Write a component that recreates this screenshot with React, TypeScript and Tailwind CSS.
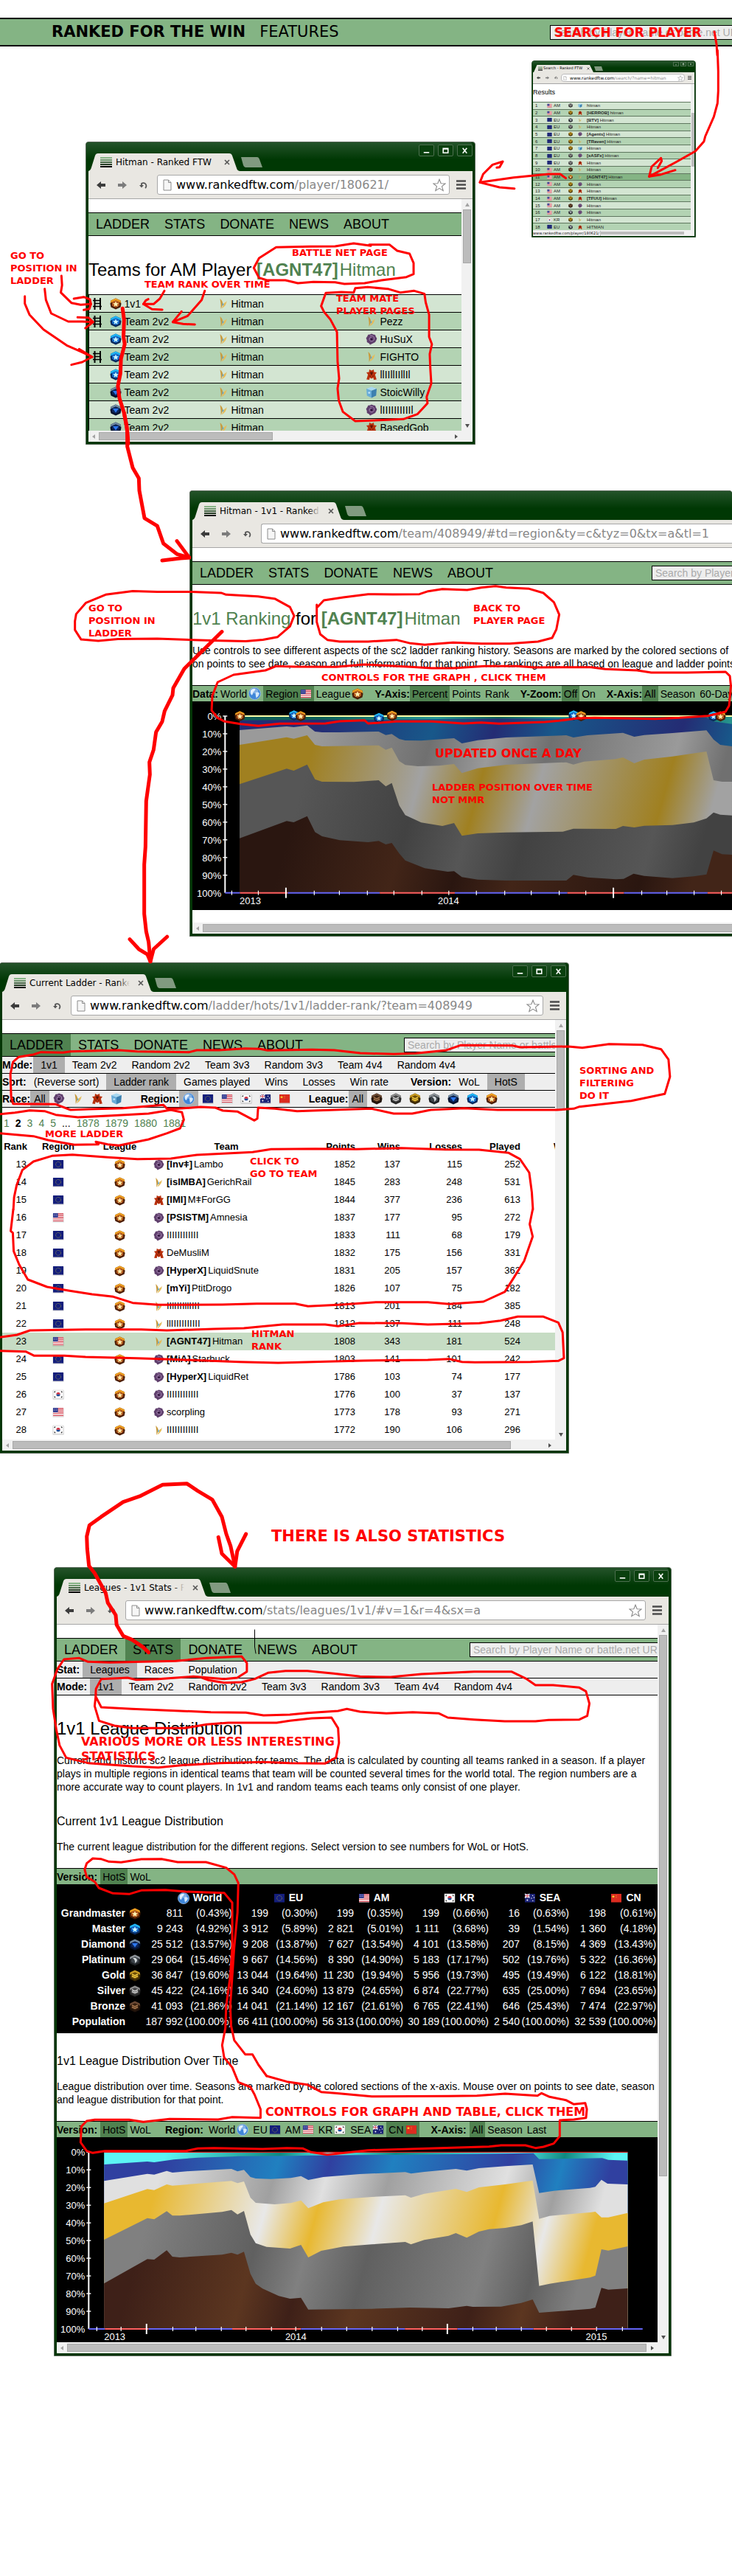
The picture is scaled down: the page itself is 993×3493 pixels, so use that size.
import React from "react";

type Pt = [number, number];
type League = "gm" | "master" | "diamond" | "platinum" | "gold" | "silver" | "bronze";
type Race = "zerg" | "protoss" | "terran" | "random";
type Flag = "eu" | "us" | "kr" | "au" | "cn" | "world";

const LEAGUES: Record<League, { rim: string; body: string; mark: string; mid: string }> = {
  gm: { rim: "#f0a020", body: "#4a1c04", mid: "#b0561a", mark: "#fff0b0" },
  master: { rim: "#20b8f8", body: "#08285c", mid: "#1268c8", mark: "#c8f4ff" },
  diamond: { rim: "#7088a0", body: "#04102c", mid: "#0c2458", mark: "#2c78f0" },
  platinum: { rim: "#8c9298", body: "#1c1f22", mid: "#3c4248", mark: "#d4dade" },
  gold: { rim: "#c89a20", body: "#3a2804", mid: "#6c4c08", mark: "#f4cc40" },
  silver: { rim: "#8c8c8c", body: "#262626", mid: "#444444", mark: "#cfcfcf" },
  bronze: { rim: "#6c4a34", body: "#20120a", mid: "#38200f", mark: "#a87850" },
};

function LeagueShape({ league }: { league: League }) {
  const c = LEAGUES[league];
  return (
    <g>
      <path d="M8 0.5 L14.5 3.5 L15.5 8 L14.5 12.5 L8 15.5 L1.5 12.5 L0.5 8 L1.5 3.5Z" fill={c.body} />
      <path d="M8 3 L13 5.4 V10.6 L8 13 L3 10.6 V5.4Z" fill={c.mid} />
      <path d="M8 0.5 L14.5 3.5 L15.2 7 L12.5 5.2 L8 3.2 L3.5 5.2 L0.8 7 L1.5 3.5Z" fill={c.rim} />
      {league === "gm" || league === "master" ? (
        <path d="M8 4.2 L9.1 7 L12 7.2 L9.8 9 L10.6 12 L8 10.3 L5.4 12 L6.2 9 L4 7.2 L6.9 7Z" fill={c.mark} />
      ) : league === "diamond" ? (
        <path d="M4 6 H12 L8 11.5Z" fill={c.mark} />
      ) : league === "platinum" ? (
        <path d="M5 5 Q10 4 11 8 Q11 10 8 12 Q9 8 5 5Z" fill={c.mark} />
      ) : (
        <path d="M4 6 L8 8 L12 6 M4 8.5 L8 10.5 L12 8.5" fill="none" stroke={c.mark} strokeWidth="1.4" />
      )}
    </g>
  );
}

function LeagueIcon({ league, className = "size-4" }: { league: League; className?: string }) {
  return (
    <svg viewBox="0 0 16 16" className={`${className} shrink-0`} aria-hidden="true">
      <LeagueShape league={league} />
    </svg>
  );
}

function RaceIcon({ race, className = "size-4" }: { race: Race; className?: string }) {
  return (
    <svg viewBox="0 0 16 16" className={`${className} shrink-0`} aria-hidden="true">
      {race === "zerg" && (
        <g>
          <path d="M8 0.4 L10.4 1.4 L13 2 L13.8 4.6 L15.4 7 L14.4 9.6 L13 12 L10 13.6 L6 15.4 L4.6 13.4 L1.8 12 L1.6 9 L0.6 6.6 L2.2 4.2 L3.4 1.8 L6 1.6Z" fill="#5f3f6c" />
          <path d="M8 8 Q9.5 6 7.5 5.4 Q4.6 5.4 5 8.4 Q6 11.6 9.6 10.6 Q12.6 9 11.4 5.4 Q9.6 2.6 6 3.2" fill="none" stroke="#a888b4" strokeWidth="1" />
          <circle cx="8" cy="8" r="1.4" fill="#2c1238" />
        </g>
      )}
      {race === "protoss" && (
        <g>
          <path d="M3.5 1 Q7.8 5 7.2 9 L4.6 15 Q5 9 3.5 1Z" fill="#c99a3c" />
          <path d="M12.6 4 Q12.2 11 5.6 14.4 Q8.2 10 8.6 7.2 Q11 6.6 12.6 4Z" fill="#e4bd5e" />
          <path d="M6.8 6.4 L8.8 9 L6.6 10.8Z" fill="#5aa8d8" />
        </g>
      )}
      {race === "terran" && (
        <g fill="#b8300c">
          <path d="M5 1 L8 2.4 L11 1 L11.4 4.4 L15 5 L12.8 8 L14.8 14.6 L11 15 L10.4 12 L8 13.6 L5.6 12 L5 15 L1.2 14.6 L3.2 8 L1 5 L4.6 4.4Z" />
          <path d="M6.4 5 H9.6 L8 8.6Z M5 9.4 L7 10.6 M11 9.4 L9 10.6" fill="#5c1204" stroke="#5c1204" strokeWidth="0.8" />
        </g>
      )}
      {race === "random" && (
        <g>
          <path d="M8 0.4 L15 3 L8 5.8 L1 3Z" fill="#a8d8f0" />
          <path d="M1 3 L8 5.8 V15.6 L1.8 12.4Z" fill="#68acd8" />
          <path d="M15 3 L8 5.8 V15.6 L14.2 12.4Z" fill="#3c80b0" />
          <circle cx="4.8" cy="8.6" r="1.4" fill="#c0e4f8" />
        </g>
      )}
    </svg>
  );
}

function FlagIcon({ flag, className = "h-4 w-4" }: { flag: Flag; className?: string }) {
  return (
    <svg viewBox="0 0 16 16" className={`${className} shrink-0`} aria-hidden="true">
      {flag === "world" && (
        <g>
          <circle cx="8" cy="8" r="7.6" fill="#3f86d8" stroke="#a8c8ec" strokeWidth="0.7" />
          <path d="M3 4 Q6 1 9 2 Q8 5 6 6 Q6 9 4.4 10 Q1.4 8 3 4Z M9 7 Q13 5 14 8 Q13 12 10 13.6 Q9 10 9 7Z" fill="#d4e8fa" />
          <ellipse cx="7.5" cy="4.6" rx="5" ry="3.2" fill="#fff" opacity="0.35" />
        </g>
      )}
      {flag !== "world" && <rect x="0.6" y="2.6" width="15" height="12" fill="#000" opacity="0.18" />}
      {flag === "eu" && (
        <g>
          <rect x="1" y="2" width="14" height="11.5" fill="#141e7c" />
          <circle cx="8" cy="7.8" r="3.4" fill="none" stroke="#8c8c4c" strokeWidth="1" strokeDasharray="1 0.8" />
        </g>
      )}
      {flag === "us" && (
        <g>
          <rect x="1" y="2" width="14" height="11.5" fill="#fff" />
          <path d="M1 2.8 H15 M1 5.2 H15 M1 7.6 H15 M1 10 H15 M1 12.5 H15" stroke="#d03040" strokeWidth="1.2" />
          <rect x="1" y="2" width="6.6" height="6" fill="#303a90" />
          <path d="M2 3.6 H7 M2 5.6 H7" stroke="#c8cce8" strokeWidth="0.7" strokeDasharray="0.8 0.8" />
        </g>
      )}
      {flag === "kr" && (
        <g>
          <rect x="1" y="2" width="14" height="11.5" fill="#fafafa" stroke="#ccc" strokeWidth="0.5" />
          <path d="M5.4 7.7 A2.6 2.6 0 0 1 10.6 7.7Z" fill="#d02838" />
          <path d="M5.4 7.7 A2.6 2.6 0 0 0 10.6 7.7Z" fill="#1c4c98" />
          <path d="M2.6 5 L4 3.6 M12 3.6 L13.4 5 M2.6 10.6 L4 12 M12 12 L13.4 10.6" stroke="#222" strokeWidth="1.2" />
        </g>
      )}
      {flag === "au" && (
        <g>
          <rect x="1" y="2" width="14" height="11.5" fill="#1c2478" />
          <path d="M1 2 L7.4 7.4 M7.4 2 L1 7.4 M4.2 2 V7.4 M1 4.7 H7.4" stroke="#fff" strokeWidth="1.4" />
          <path d="M4.2 2 V7.4 M1 4.7 H7.4" stroke="#d02838" strokeWidth="0.8" />
          <g fill="#fff">
            <circle cx="4.4" cy="10.6" r="1" />
            <circle cx="11.6" cy="4.4" r="0.7" />
            <circle cx="13.4" cy="7" r="0.7" />
            <circle cx="10" cy="8" r="0.7" />
            <circle cx="11.8" cy="11.4" r="0.7" />
          </g>
        </g>
      )}
      {flag === "cn" && (
        <g>
          <rect x="1" y="2" width="14" height="11.5" fill="#dc2c20" />
          <path d="M4 3.4 L4.6 5 L6.2 5 L5 6 L5.4 7.6 L4 6.6 L2.6 7.6 L3 6 L1.8 5 L3.4 5Z" fill="#f8d030" />
          <circle cx="8" cy="4.4" r="0.5" fill="#f8d030" />
          <circle cx="8" cy="6.8" r="0.5" fill="#f8d030" />
        </g>
      )}
    </svg>
  );
}

function LadderIcon() {
  return (
    <svg viewBox="0 0 14 16" className="h-4 w-3.5" aria-hidden="true">
      <path d="M3.5 0 V16 M11 0 V16" stroke="#000" strokeWidth="2" />
      <path d="M1 3.5 H11 M3 7.5 H11 M1 11.5 H13" stroke="#000" strokeWidth="1.3" />
    </svg>
  );
}

/* ---------- browser window ---------- */

function Favicon({ className = "h-3.5 w-4" }: { className?: string }) {
  return (
    <svg viewBox="0 0 16 14" className={`${className} shrink-0`} aria-hidden="true">
      <rect width="16" height="2" fill="#86b486" />
      <rect y="3" width="16" height="2" fill="#6b956b" />
      <rect y="6" width="16" height="2" fill="#456645" />
      <rect y="9" width="16" height="2" fill="#263c26" />
      <rect y="12" width="16" height="2" fill="#000" />
    </svg>
  );
}

function NavIcons({ className }: { className: string }) {
  return (
    <>
      <svg viewBox="0 0 12 12" className={className} aria-hidden="true">
        <path d="M0 6 L6 1 V4 H12 V8 H6 V11Z" fill="#3c3c3c" />
      </svg>
      <svg viewBox="0 0 12 12" className={className} aria-hidden="true">
        <path d="M12 6 L6 1 V4 H0 V8 H6 V11Z" fill="#7c7c7c" />
      </svg>
      <svg viewBox="0 0 12 12" className={className} aria-hidden="true">
        <path d="M3 7 V4 A3.8 3.8 0 1 1 8 10" fill="none" stroke="#555" strokeWidth="1.8" />
        <path d="M0 6 H6 L3 9.6Z" fill="#555" />
      </svg>
    </>
  );
}

function PageIcon({ className }: { className: string }) {
  return (
    <svg viewBox="0 0 12 16" className={`${className} shrink-0`} aria-hidden="true">
      <path d="M1 1 H7.5 L11 4.5 V15 H1Z M7.5 1 V4.5 H11" fill="#f6f6f6" stroke="#8c8c8c" />
    </svg>
  );
}

function StarIcon({ className }: { className: string }) {
  return (
    <svg viewBox="0 0 18 18" className={`${className} shrink-0`} aria-hidden="true">
      <path d="M9 1.2 L11.2 6.8 L17 7 L12.5 10.7 L14.2 16.6 L9 13.3 L3.8 16.6 L5.5 10.7 L1 7 L6.8 6.8Z" fill="#fff" stroke="#8a8a8a" strokeWidth="1.1" />
    </svg>
  );
}

function MenuIcon({ className }: { className: string }) {
  return (
    <svg viewBox="0 0 13 13" className={`${className} shrink-0`} aria-hidden="true">
      <path d="M0 1.5 H13 M0 6.5 H13 M0 11.5 H13" stroke="#4c4c4c" strokeWidth="2.6" />
    </svg>
  );
}

function WindowButtons({ className, gap }: { className: string; gap: string }) {
  const marks = ["M6 10.5 H14", "M6.5 4.5 H13.5 V11 H6.5Z M6.5 5.4 H13.5", "M7 4 L13 11.5 M13 4 L7 11.5"];
  const names = ["Minimize", "Maximize", "Close"];
  return (
    <div className={`ml-auto flex ${gap}`}>
      {marks.map((d, i) => (
        <button key={d} type="button" aria-label={names[i]} className={className}>
          <svg viewBox="0 0 20 15" className="h-full w-full" aria-hidden="true">
            <path d={d} fill="none" stroke="#fff" strokeWidth="1.7" />
          </svg>
        </button>
      ))}
    </div>
  );
}

function Arrow({ d, dark }: { d: string; dark?: boolean }) {
  return (
    <svg viewBox="0 0 14 14" className="size-3.5 shrink-0" aria-hidden="true">
      <path d={d} fill={dark ? "#505050" : "#a3a3a3"} />
    </svg>
  );
}

function Browser({
  title,
  host = "www.rankedftw.com",
  path,
  frame,
  vThumb,
  hThumb,
  cutRight,
  children,
}: {
  title: string;
  host?: string;
  path: string;
  frame: string;
  vThumb?: string;
  hThumb: string;
  cutRight?: boolean;
  children: React.ReactNode;
}) {
  return (
    <section
      className={`${frame} flex flex-col rounded-t border border-[#566656] bg-[#033606] pb-[3px] pl-[3px] ${cutRight ? "border-r-0" : "pr-[3px]"}`}
    >
      <div className="-ml-[3px] flex h-[39px] shrink-0 items-start rounded-t bg-[linear-gradient(#24532a,#003804_60%)] pl-[3px]">
        <div className="relative mt-[15px] flex h-6 w-[206px] items-center gap-[5px] pl-4">
          <svg viewBox="0 0 206 24" className="absolute inset-0 h-full w-full" aria-hidden="true">
            <path d="M0 24 Q3 23 4 19 L9 3 Q10 0 13 0 H191 Q194 0 195 3 L201 20 Q202 24 206 24Z" fill="#e9e7e2" />
          </svg>
          <Favicon className="relative h-3.5 w-4" />
          <div className="relative w-[136px] overflow-hidden font-[DejaVu_Sans,sans-serif] text-xs whitespace-nowrap">
            {title}
            {title.length > 20 && (
              <div className="absolute inset-y-0 right-0 w-4 bg-linear-to-r from-transparent to-[#e9e7e2]" />
            )}
          </div>
          <svg viewBox="0 0 8 8" className="relative ml-1.5 size-2" aria-hidden="true">
            <path d="M1 1 L7 7 M7 1 L1 7" stroke="#555" strokeWidth="1.6" />
          </svg>
        </div>
        <svg viewBox="0 0 30 14" className="mt-5 h-3.5 w-[30px]" aria-hidden="true">
          <path d="M1 0 H23 Q25 0 26 3 L30 14 H7 Q5 14 4 11Z" fill="#819a80" />
        </svg>
        {!cutRight && (
          <WindowButtons gap="gap-[5px] mt-[3px]" className="h-4 w-[21px] rounded-[2px] border border-[#4c6e4e] bg-[#0a400e]" />
        )}
      </div>
      <div className="flex h-[38px] shrink-0 items-center border-b border-[#a6a6a6] bg-[#e9e7e2] pl-[11px]">
        <div className="flex gap-[17px]">
          <NavIcons className="size-3" />
        </div>
        <div
          className={`ml-3 flex h-[27px] min-w-0 flex-1 items-center rounded-[3px] border border-[#a8a8a8] bg-white pl-[7px] ${cutRight ? "rounded-r-none border-r-0" : ""}`}
        >
          <PageIcon className="h-4 w-3" />
          <div className="ml-1.5 min-w-0 flex-1 overflow-hidden font-[DejaVu_Sans,sans-serif] text-base whitespace-nowrap text-[#888]">
            <span className="text-black">{host}</span>
            {path}
          </div>
          {!cutRight && <StarIcon className="mr-1 size-[18px]" />}
        </div>
        {!cutRight && <MenuIcon className="mx-[9px] size-[13px]" />}
      </div>
      <div className="flex min-h-0 flex-1 bg-[#f1f1f1]">
        <div className="min-w-0 flex-1 overflow-hidden bg-white pt-[18px]">{children}</div>
        {!cutRight && (
          <div className="flex w-[15px] shrink-0 flex-col items-center">
            <Arrow d="M4 10 L7 5 L10 10Z" />
            <div className={`${vThumb} w-[11px] border border-[#a8a8a8] bg-[#bcbcbc]`} />
            <div className="mt-auto">
              <Arrow dark d="M4 5 L7 10 L10 5Z" />
            </div>
          </div>
        )}
      </div>
      <div className={`flex h-[15px] shrink-0 items-center bg-[#f1f1f1] ${cutRight ? "" : "pr-[15px]"}`}>
        <Arrow d="M9 4 L5 7 L9 10Z" />
        <div className={`${hThumb} h-[11px] border border-[#a8a8a8] bg-[#bcbcbc]`} />
        {!cutRight && (
          <div className="ml-auto">
            <Arrow dark d="M5 4 L9 7 L5 10Z" />
          </div>
        )}
      </div>
    </section>
  );
}

function SiteNav({ active, search, id }: { active?: string; search?: string; id: string }) {
  return (
    <nav className="flex h-8 items-center border-y border-black bg-[#84b484] text-lg">
      {["LADDER", "STATS", "DONATE", "NEWS", "ABOUT"].map((item) => (
        <a
          key={item}
          href="#nav"
          className={`flex h-full items-center px-2.5 ${item === active ? "bg-[#508250]" : ""}`}
        >
          {item}
        </a>
      ))}
      {search && (
        <input
          id={id}
          aria-label="Search by player name or battle.net URL"
          placeholder="Search by Player Name or battle.net URL"
          className={`${search} ml-auto h-5 shrink-0 border border-r-0 border-black bg-[#eee] pl-1 text-sm placeholder:text-[#aaa]`}
        />
      )}
    </nav>
  );
}

function FilterRow({ children }: { children: React.ReactNode }) {
  return <div className="flex h-[23px] items-stretch overflow-hidden border-b border-black bg-[#eee] text-sm whitespace-nowrap">{children}</div>;
}

function FilterLabel({ children, spaced }: { children: React.ReactNode; spaced?: string }) {
  return <span className={`flex items-center font-bold ${spaced ?? ""}`}>{children}</span>;
}

function FilterItem({ children, on, tight }: { children: React.ReactNode; on?: boolean; tight?: boolean }) {
  return (
    <button type="button" className={`flex shrink-0 items-center ${tight ? "px-[5px]" : "px-2.5"} ${on ? "bg-[#aeaeae]" : ""}`}>
      {children}
    </button>
  );
}

type Ctl = { text: string; icon?: React.ReactNode; on?: boolean };

function ControlBar({ groups, gap, labelGap }: { groups: { label: string; items: Ctl[] }[]; gap: string; labelGap: string }) {
  return (
    <div className={`flex h-[22px] items-stretch overflow-hidden border-t border-black bg-[#84b484] text-sm whitespace-nowrap ${gap}`}>
      {groups.map((g) => (
        <div key={g.label} className="flex shrink-0 items-stretch">
          <span className={`flex items-center font-bold ${labelGap}`}>{g.label}</span>
          {g.items.map((it) => (
            <button key={it.text} type="button" className={`flex items-center gap-0.5 px-[3px] ${it.on ? "bg-[#508250]" : ""}`}>
              {it.text}
              {it.icon}
            </button>
          ))}
        </div>
      ))}
    </div>
  );
}

/* ---------- stacked league chart ---------- */

const pts = (list: Pt[]) => list.map((p) => p.join(",")).join(" ");

type ChartSpec = {
  id: string;
  size: [number, number];
  scale: [number, number];
  shift: [number, number];
  top: number;
  bottom: number;
  axisX: number;
  lines: Pt[][];
  colors: [string, string][];
  peaks: number[];
  vector: [number, number, number, number];
  season: number[];
  ticks: number[];
  bigTicks: number[];
  years: [string, number][];
  topLine: string;
  topWidth: number;
  markers?: [number, number, League][];
};

function StackChart({ spec }: { spec: ChartSpec }) {
  const [w, h] = spec.size;
  const X = (x: number) => x * spec.scale[0] + spec.shift[0];
  const Y = (y: number) => y * spec.scale[1] + spec.shift[1];
  const first = spec.lines[0][0][0];
  const last = spec.lines[0][spec.lines[0].length - 1][0];
  const base: Pt[] = [[first, spec.bottom], [last, spec.bottom]];
  const [x1, y1, x2, y2] = spec.vector;
  return (
    <div className="overflow-hidden bg-black">
      <svg width={w} height={h} viewBox={`0 0 ${w} ${h}`} className="block" role="img" aria-label="League distribution over time">
        <defs>
          {spec.colors.map(([a, b], i) => (
            <linearGradient key={i} id={`${spec.id}${i}`} gradientUnits="userSpaceOnUse" x1={x1} y1={y1} x2={x2} y2={y2}>
              {spec.peaks.map((p, k) => (
                <stop key={k} offset={Math.abs(p)} stopColor={p >= 0 ? a : b} />
              ))}
            </linearGradient>
          ))}
        </defs>
        <g transform={`translate(${spec.shift[0]} ${spec.shift[1]}) scale(${spec.scale[0]} ${spec.scale[1]})`}>
          {spec.lines.map((line, i) => (
            <polygon key={i} points={pts([...line, base[1], base[0]])} fill={`url(#${spec.id}${i})`} />
          ))}
        </g>
        <path d={`M${X(first)} ${Y(spec.top)} H${X(last)}`} stroke={spec.topLine} strokeWidth={spec.topWidth} />
        <path d={`M${X(spec.axisX)} ${Y(spec.top)} V${Y(spec.bottom)}`} stroke="#fff" strokeWidth="2" />
        {Array.from({ length: 11 }, (_, i) => {
          const y = Y(spec.top + ((spec.bottom - spec.top) * i) / 10);
          return (
            <g key={i}>
              {i < 10 && <path d={`M${X(spec.axisX) - 3} ${y} h6`} stroke="#fff" strokeWidth="1.4" />}
              <text x={X(spec.axisX) - 5} y={y + 5} textAnchor="end" fontSize="13" fill="#fff">
                {i * 10}%
              </text>
            </g>
          );
        })}
        {spec.season.slice(1).map((x, i) => (
          <path key={x} d={`M${X(spec.season[i])} ${Y(spec.bottom)} H${X(x)}`} stroke={i % 2 ? "#ff5f5f" : "#6464f4"} strokeWidth="2" />
        ))}
        {spec.ticks.map((x) => (
          <path key={x} d={`M${X(x)} ${Y(spec.bottom) - 3} v6`} stroke="#fff" strokeWidth="1.2" />
        ))}
        {spec.bigTicks.map((x) => (
          <path key={x} d={`M${X(x)} ${Y(spec.bottom) - 7} v14`} stroke="#fff" strokeWidth="2" />
        ))}
        {spec.years.map(([t, x]) => (
          <text key={t} x={X(x)} y={Y(spec.bottom) + 15} fontSize="13" fill="#fff">
            {t}
          </text>
        ))}
        {spec.markers?.map(([x, y, lg]) => (
          <g key={x} transform={`translate(${X(x) - 7} ${Y(y) - 7}) scale(.92)`}>
            <LeagueShape league={lg} />
          </g>
        ))}
      </svg>
    </div>
  );
}

const TEAM_CHART: ChartSpec = {
  id: "team",
  size: [732, 283],
  scale: [0.4802, 0.33333],
  shift: [-21, -51],
  top: 213,
  bottom: 932,
  axisX: 136,
  colors: [
    ["#0e6058", "#2a9a94"],
    ["#242c74", "#18588a"],
    ["#9a9a9a", "#707070"],
    ["#a08020", "#a2a2a2"],
    ["#565656", "#424242"],
    ["#2a1610", "#422518"],
  ],
  peaks: [0.12, -0.355, 0.48, -0.6, 0.86, -0.965],
  vector: [177, 550, 1518, 808],
  lines: [
    [[177, 213], [1568, 213]],
    [[177, 230], [390, 228], [570, 228], [780, 224], [1100, 222], [1495, 218], [1515, 235], [1568, 245]],
    [[177, 270], [310, 255], [330, 258], [368, 251], [390, 276], [410, 279], [460, 279], [570, 276], [590, 290], [607, 286], [628, 306], [645, 312], [690, 313], [783, 303], [805, 324], [850, 311], [930, 300], [1100, 291], [1120, 300], [1160, 291], [1260, 281], [1292, 297], [1320, 290], [1400, 282], [1496, 271], [1516, 308], [1535, 330], [1568, 336]],
    [[177, 330], [310, 299], [330, 305], [368, 291], [390, 330], [410, 336], [570, 332], [590, 350], [607, 341], [628, 396], [645, 412], [680, 417], [740, 415], [783, 408], [805, 445], [850, 425], [930, 411], [1100, 401], [1120, 410], [1150, 398], [1240, 388], [1260, 381], [1292, 405], [1320, 390], [1400, 377], [1496, 357], [1516, 474], [1540, 480], [1568, 480]],
    [[177, 490], [310, 427], [330, 435], [368, 410], [390, 470], [410, 480], [500, 481], [570, 474], [590, 499], [607, 485], [628, 577], [645, 616], [690, 646], [750, 660], [783, 648], [805, 700], [850, 690], [930, 686], [1090, 683], [1120, 671], [1240, 672], [1260, 660], [1292, 666], [1320, 659], [1400, 656], [1460, 646], [1496, 629], [1516, 605], [1535, 614], [1568, 617]],
    [[177, 710], [310, 640], [330, 645], [368, 620], [390, 685], [410, 702], [460, 718], [540, 726], [570, 721], [590, 735], [607, 729], [628, 772], [645, 800], [700, 832], [765, 846], [783, 844], [805, 868], [850, 878], [930, 882], [1100, 882], [1120, 859], [1160, 869], [1240, 877], [1262, 875], [1290, 854], [1320, 863], [1400, 872], [1460, 865], [1496, 857], [1516, 760], [1540, 775], [1568, 777]],
  ],
  season: [136, 178, 313, 573, 785, 1103, 1263, 1499, 1568],
  ticks: [155, 230, 388, 459, 538, 613, 692, 768, 846, 926, 1001, 1080, 1155, 1313, 1384, 1461, 1538],
  bigTicks: [308, 1233],
  years: [["2013", 177], ["2014", 737]],
  topLine: "#ffffa8",
  topWidth: 2,
  markers: [[177, 212, "gm"], [330, 209, "master"], [349, 212, "gm"], [570, 220, "master"], [607, 211, "gm"], [1120, 209, "master"], [1141, 212, "gm"], [1515, 213, "master"], [1535, 213, "gm"]],
};

const STATS_CHART: ChartSpec = {
  id: "stats",
  size: [816, 278],
  scale: [0.5485, 0.33333],
  shift: [-17, -148],
  top: 505,
  bottom: 1224,
  axisX: 110,
  colors: [
    ["#5cf4f4", "#108880"],
    ["#3040a0", "#2080c0"],
    ["#e0e0e0", "#a0a0a0"],
    ["#e8b830", "#e8e8e8"],
    ["#808080", "#606060"],
    ["#3e2018", "#5c3620"],
  ],
  peaks: [0.08, -0.3, 0.4, -0.52, 0.745, -0.845, 0.94],
  vector: [148, 800, 1407, 1009],
  lines: [
    [[148, 505], [1443, 505]],
    [[148, 555], [255, 543], [272, 546], [320, 535], [380, 527], [465, 523], [480, 521], [620, 520], [650, 518], [900, 515], [1210, 509], [1224, 533], [1380, 529], [1395, 536], [1443, 539]],
    [[148, 622], [255, 593], [272, 596], [303, 581], [317, 588], [360, 582], [463, 573], [478, 583], [494, 577], [510, 606], [523, 612], [560, 614], [610, 610], [635, 602], [653, 618], [690, 606], [780, 594], [893, 586], [907, 592], [940, 585], [1018, 573], [1045, 580], [1075, 570], [1140, 562], [1208, 555], [1224, 671], [1260, 662], [1350, 650], [1363, 646], [1378, 617], [1393, 633], [1443, 636]],
    [[148, 713], [255, 655], [272, 659], [303, 636], [317, 641], [463, 622], [478, 631], [494, 624], [510, 690], [523, 711], [570, 717], [610, 712], [635, 701], [653, 733], [690, 709], [730, 697], [810, 687], [893, 680], [907, 690], [940, 674], [1018, 654], [1045, 667], [1075, 648], [1140, 636], [1208, 620], [1224, 776], [1250, 764], [1350, 750], [1363, 747], [1378, 770], [1395, 770], [1443, 752]],
    [[148, 861], [255, 773], [272, 778], [303, 745], [317, 763], [335, 763], [440, 748], [463, 740], [478, 758], [494, 744], [510, 840], [523, 875], [550, 890], [608, 897], [635, 882], [653, 933], [685, 906], [740, 889], [810, 880], [893, 870], [907, 880], [940, 862], [1000, 845], [1018, 834], [1045, 853], [1075, 828], [1100, 818], [1140, 813], [1180, 802], [1208, 787], [1224, 1049], [1250, 1040], [1350, 1015], [1363, 1007], [1378, 900], [1395, 905], [1443, 888]],
    [[148, 1039], [255, 940], [272, 942], [303, 904], [317, 930], [335, 933], [440, 922], [463, 914], [478, 922], [494, 910], [510, 1000], [523, 1040], [540, 1060], [580, 1090], [608, 1101], [635, 1097], [653, 1145], [810, 1142], [905, 1137], [1000, 1140], [1045, 1130], [1060, 1134], [1130, 1133], [1180, 1118], [1208, 1104], [1224, 1158], [1350, 1142], [1363, 1137], [1378, 1057], [1395, 1064], [1443, 1059]],
  ],
  season: [110, 150, 258, 465, 635, 892, 1022, 1210, 1365, 1480],
  ticks: [130, 190, 318, 375, 438, 499, 562, 622, 686, 748, 811, 874, 935, 1060, 1118, 1180, 1242, 1304, 1366, 1430],
  bigTicks: [253, 997],
  years: [["2013", 148], ["2014", 596], ["2015", 1339]],
  topLine: "#ff0000",
  topWidth: 1,
};

/* ---------- window contents ---------- */

const SEARCH_ROWS: [Flag, string, League, Race, string, string][] = [
  ["us", "AM", "silver", "random", "", "hitman"],
  ["us", "AM", "gold", "terran", "[HERROB]", "hitman"],
  ["eu", "EU", "platinum", "protoss", "[BTV]", "Hitman"],
  ["eu", "EU", "silver", "protoss", "", "Hitman"],
  ["eu", "EU", "gold", "zerg", "[Agents]", "Hitman"],
  ["eu", "EU", "gold", "protoss", "[TRaven]", "Hitman"],
  ["eu", "EU", "gold", "random", "", "Hitman"],
  ["eu", "EU", "silver", "zerg", "[xASFx]", "Hitman"],
  ["eu", "EU", "silver", "terran", "", "Hitman"],
  ["us", "AM", "bronze", "protoss", "", "Hitman"],
  ["us", "AM", "gm", "protoss", "[AGNT47]", "Hitman"],
  ["us", "AM", "gold", "zerg", "", "Hitman"],
  ["us", "AM", "gold", "terran", "", "Hitman"],
  ["us", "AM", "gold", "terran", "[TFUU]", "Hitman"],
  ["us", "AM", "bronze", "zerg", "", "Hitman"],
  ["us", "AM", "platinum", "zerg", "", "Hitman"],
  ["kr", "KR", "gold", "protoss", "", "Hitman"],
  ["eu", "EU", "platinum", "terran", "", "HITMAN"],
];

function SearchWindow() {
  return (
    <section className="mt-[19px] flex h-60 w-[223px] shrink-0 flex-col rounded-t-sm border border-[#2c502e] bg-[#033606] pb-px">
      <div className="flex h-[15px] shrink-0 items-start bg-[linear-gradient(#24532a,#003804_60%)] pl-0.5">
        <div className="relative mt-[5px] flex h-2.5 w-[82px] items-center pl-1.5">
          <svg viewBox="0 0 82 10" className="absolute inset-0 h-full w-full" aria-hidden="true">
            <path d="M0 10 L4 1 Q4 0 5 0 H76 L81 10Z" fill="#e9e7e2" />
          </svg>
          <Favicon className="relative h-1.5 w-1.5" />
          <span className="relative ml-px font-[DejaVu_Sans,sans-serif] text-[5px] whitespace-nowrap">Search - Ranked FTW</span>
          <svg viewBox="0 0 8 8" className="relative ml-1.5 size-1" aria-hidden="true">
            <path d="M1 1 L7 7 M7 1 L1 7" stroke="#555" strokeWidth="1.6" />
          </svg>
        </div>
        <svg viewBox="0 0 12 6" className="mt-[7px] h-1.5 w-3" aria-hidden="true">
          <path d="M0 0 H10 L12 6 H2Z" fill="#819a80" />
        </svg>
        <WindowButtons gap="gap-0.5 mt-px mr-0.5" className="h-1.5 w-2 border border-[#4c6e4e]" />
      </div>
      <div className="mx-px flex h-4 shrink-0 items-center border-b border-[#a6a6a6] bg-[#e9e7e2] pl-[5px]">
        <div className="flex gap-[7px]">
          <NavIcons className="size-[5px]" />
        </div>
        <div className="ml-1 flex h-[11px] flex-1 items-center rounded-sm border border-[#bbb] bg-white pl-0.5">
          <PageIcon className="h-1.5 w-[5px]" />
          <div className="ml-1 flex-1 font-[DejaVu_Sans,sans-serif] text-[6px] whitespace-nowrap text-[#888]">
            <span className="text-black">www.rankedftw.com</span>/search/?name=hitman
          </div>
          <StarIcon className="mr-px size-2" />
        </div>
        <MenuIcon className="mx-1 size-[5px]" />
      </div>
      <div className="mx-px flex min-h-0 flex-1 bg-[#f1f1f1]">
        <div className="flex flex-1 flex-col bg-white">
          <h2 className="flex h-6 items-center text-[9px]">Results</h2>
          <div className="flex flex-1 flex-col text-[6px] leading-none text-[#222]">
            {SEARCH_ROWS.map(([flag, region, league, race, tag, name], i) => (
              <a
                key={i}
                href="#player"
                className={`flex flex-1 items-center border-t border-[#5f775f] pl-[3px] ${i === 10 ? "bg-[#84b484]" : i % 2 ? "bg-[#b3d3b3]" : "bg-[#d3e5d2]"}`}
              >
                <span className="w-4">{i + 1}</span>
                <FlagIcon flag={flag} className="h-[7px] w-[7px]" />
                <span className="ml-0.5 w-5">{region}</span>
                <LeagueIcon league={league} className="size-1.5" />
                <RaceIcon race={race} className="ml-[7px] size-1.5" />
                <span className="ml-1.5 whitespace-nowrap">
                  {tag && <b>{tag} </b>}
                  {name}
                </span>
              </a>
            ))}
          </div>
        </div>
        <div className="flex w-[5px] flex-col items-center pt-[39px]">
          <div className="h-[73px] w-1 bg-[#bcbcbc]" />
        </div>
      </div>
      <div className="mx-px flex h-2 shrink-0 items-center bg-[#f1f1f1]">
        <span className="border-r border-[#bbb] bg-[#f4f4f4] pr-px font-[DejaVu_Sans,sans-serif] text-[5px] leading-[7px]">www.rankedftw.com/player/180621/</span>
        <div className="mr-3.5 h-1 flex-1 bg-[#bcbcbc]" />
      </div>
    </section>
  );
}

const TEAM_ROWS: [boolean, League, string, Race | null, string][] = [
  [true, "gm", "1v1", null, ""],
  [true, "master", "Team 2v2", "protoss", "Pezz"],
  [false, "master", "Team 2v2", "zerg", "HuSuX"],
  [true, "master", "Team 2v2", "protoss", "FIGHTO"],
  [false, "master", "Team 2v2", "terran", "llIIllIIllIl"],
  [false, "diamond", "Team 2v2", "random", "StoicWilly"],
  [false, "diamond", "Team 2v2", "zerg", "lIIIIIIIIIIl"],
  [false, "diamond", "Team 2v2", "terran", "BasedGob"],
];

function PlayerWindow() {
  return (
    <Browser
      title="Hitman - Ranked FTW"
      path="/player/180621/"
      frame="mt-[129px] h-[411px] w-[529px] shrink-0"
      vThumb="h-[73px]"
      hThumb="w-[236px]"
    >
      <SiteNav id="player-search" />
      <h1 className="mt-8 text-2xl leading-7 whitespace-nowrap">
        Teams for AM Player{" "}
        <a href="#bnet" className="text-[#508250]">
          <b>[AGNT47]</b>
          <span className="ml-0.5">Hitman</span>
        </a>
      </h1>
      <table className="mt-[19px] w-full table-fixed border-collapse border-l border-black text-sm whitespace-nowrap">
        <colgroup>
          <col className="w-[28px]" />
          <col className="w-[146px]" />
          <col className="w-[201px]" />
          <col />
        </colgroup>
        <tbody>
          {TEAM_ROWS.map(([ladder, league, mode, mate, mateName], i) => (
            <tr key={i} className={`h-6 border-t border-black ${i % 2 ? "bg-[#b3d3b3]" : "bg-[#d3e5d2]"}`}>
              <td className="p-0 pl-1">{ladder && <LadderIcon />}</td>
              <td className="p-0">
                <a href="#team" className="flex items-center gap-1">
                  <LeagueIcon league={league} />
                  {mode}
                </a>
              </td>
              <td className="p-0">
                <a href="#me" className="flex items-center gap-[3px]">
                  <RaceIcon race="protoss" />
                  Hitman
                </a>
              </td>
              <td className="p-0">
                {mate && (
                  <a href="#mate" className="flex items-center gap-1">
                    <RaceIcon race={mate} />
                    {mateName}
                  </a>
                )}
              </td>
            </tr>
          ))}
        </tbody>
      </table>
    </Browser>
  );
}

function TeamWindow() {
  return (
    <Browser
      title="Hitman - 1v1 - Ranked FTW"
      path="/team/408949/#td=region&ty=c&tyz=0&tx=a&tl=1"
      frame="mt-[62px] ml-[257px] h-[605px]"
      hThumb="flex-1 border-r-0"
      cutRight
    >
      <SiteNav id="team-search" search="w-[109px]" />
      <h1 className="mt-8 text-2xl leading-7 whitespace-nowrap">
        <a href="#ladder" className="text-[#508250]">
          1v1 Ranking
        </a>{" "}
        for{" "}
        <a href="#player" className="text-[#508250]">
          <b>[AGNT47]</b>
          <span className="ml-0.5">Hitman</span>
        </a>
      </h1>
      <p className="mt-5 mb-5 text-sm leading-[18px] whitespace-nowrap">
        Use controls to see different aspects of the sc2 ladder ranking history. Seasons are marked by the colored sections of
        <br />
        on points to see date, season and full information for that point. The rankings are all based on league and ladder points
      </p>
      <ControlBar
        gap="gap-3"
        labelGap=""
        groups={[
          {
            label: "Data:",
            items: [
              { text: "World", icon: <FlagIcon flag="world" className="size-[17px]" /> },
              { text: "Region", icon: <FlagIcon flag="us" />, on: true },
              { text: "League", icon: <LeagueIcon league="gm" /> },
            ],
          },
          { label: "Y-Axis:", items: [{ text: "Percent", on: true }, { text: "Points" }, { text: "Rank" }] },
          { label: "Y-Zoom:", items: [{ text: "Off", on: true }, { text: "On" }] },
          { label: "X-Axis:", items: [{ text: "All", on: true }, { text: "Season" }, { text: "60-Days" }] },
        ]}
      />
      <StackChart spec={TEAM_CHART} />
    </Browser>
  );
}

const LADDER_ROWS: [number, Flag, Race, string, string, number, number, number, number][] = [
  [13, "eu", "zerg", "[Invǂ]", "Lambo", 1852, 137, 115, 252],
  [14, "eu", "protoss", "[isIMBA]", "GerichRail", 1845, 283, 248, 531],
  [15, "eu", "terran", "[IMI]", "MǂForGG", 1844, 377, 236, 613],
  [16, "us", "zerg", "[PSISTM]", "Amnesia", 1837, 177, 95, 272],
  [17, "eu", "zerg", "", "IIIIIIIIIIII", 1833, 111, 68, 179],
  [18, "eu", "terran", "", "DeMusliM", 1832, 175, 156, 331],
  [19, "eu", "zerg", "[HyperX]", "LiquidSnute", 1831, 205, 157, 362],
  [20, "eu", "protoss", "[mYi]", "PtitDrogo", 1826, 107, 75, 182],
  [21, "eu", "protoss", "", "IIlIIIIllIIII", 1813, 201, 184, 385],
  [22, "eu", "protoss", "", "llIIIIIIIIIII", 1812, 137, 111, 248],
  [23, "us", "protoss", "[AGNT47]", "Hitman", 1808, 343, 181, 524],
  [24, "eu", "zerg", "[MiA]", "Starbuck", 1803, 141, 101, 242],
  [25, "eu", "zerg", "[HyperX]", "LiquidRet", 1786, 103, 74, 177],
  [26, "kr", "zerg", "", "IIIIIIIIIIII", 1776, 100, 37, 137],
  [27, "us", "zerg", "", "scorpling", 1773, 178, 93, 271],
  [28, "kr", "protoss", "", "IIIIIIIIIIII", 1772, 190, 106, 296],
];

const MODES = ["1v1", "Team 2v2", "Random 2v2", "Team 3v3", "Random 3v3", "Team 4v4", "Random 4v4"];

function ModeRow({ labelGap = "mr-px" }: { labelGap?: string }) {
  return (
    <FilterRow>
      <FilterLabel spaced={labelGap}>Mode:</FilterLabel>
      {MODES.map((m) => (
        <FilterItem key={m} on={m === "1v1"}>
          {m}
        </FilterItem>
      ))}
    </FilterRow>
  );
}

function LadderWindow() {
  return (
    <Browser
      title="Current Ladder - Ranked FTW"
      path="/ladder/hots/1v1/ladder-rank/?team=408949"
      frame="-ml-px mt-[35px] h-[666px] w-[773px]"
      vThumb="h-[109px]"
      hThumb="w-[676px]"
    >
      <SiteNav id="ladder-search" active="LADDER" search="w-[205px]" />
      <ModeRow />
      <FilterRow>
        <FilterLabel>Sort:</FilterLabel>
        {["(Reverse sort)", "Ladder rank", "Games played", "Wins", "Losses", "Win rate"].map((m) => (
          <FilterItem key={m} on={m === "Ladder rank"}>
            {m}
          </FilterItem>
        ))}
        <FilterLabel spaced="ml-5">Version:</FilterLabel>
        <FilterItem>WoL</FilterItem>
        <FilterItem on>HotS</FilterItem>
      </FilterRow>
      <FilterRow>
        <FilterLabel>Race:</FilterLabel>
        <FilterItem tight on>All</FilterItem>
        {(["zerg", "protoss", "terran", "random"] as Race[]).map((r) => (
          <FilterItem key={r} tight>
            <RaceIcon race={r} />
          </FilterItem>
        ))}
        <FilterLabel spaced="ml-5">Region:</FilterLabel>
        {(["world", "eu", "us", "kr", "au", "cn"] as Flag[]).map((f) => (
          <FilterItem key={f} tight on={f === "world"}>
            <FlagIcon flag={f} />
          </FilterItem>
        ))}
        <FilterLabel spaced="ml-5">League:</FilterLabel>
        <FilterItem tight on>All</FilterItem>
        {(["bronze", "silver", "gold", "platinum", "diamond", "master", "gm"] as League[]).map((l) => (
          <FilterItem key={l} tight>
            <LeagueIcon league={l} />
          </FilterItem>
        ))}
      </FilterRow>
      <div className="mt-3 flex text-sm leading-[18px] text-[#508250]">
        {["1", "2", "3", "4", "5", "...", "1878", "1879", "1880", "1881"].map((p, i) =>
          p === "..." ? (
            <span key={i} className="px-1 text-black">
              {p}
            </span>
          ) : (
            <a key={i} href="#page" className={`first:pl-0.5 px-1 ${p === "2" ? "font-bold text-black" : ""}`}>
              {p}
            </a>
          ),
        )}
      </div>
      <table className="mt-[11px] w-full table-fixed border-collapse text-[13px] whitespace-nowrap">
        <colgroup>
          <col className="w-[38px]" />
          <col className="w-[76px]" />
          <col className="w-[91px]" />
          <col className="w-[198px]" />
          <col className="w-[81px]" />
          <col className="w-[61px]" />
          <col className="w-[84px]" />
          <col className="w-[79px]" />
          <col />
        </colgroup>
        <thead>
          <tr className="h-6">
            <th className="p-0 pr-1 text-right">Rank</th>
            <th className="p-0">Region</th>
            <th className="p-0">League</th>
            <th className="p-0">Team</th>
            <th className="p-0 pr-[5px] text-right">Points</th>
            <th className="p-0 pr-[5px] text-right">Wins</th>
            <th className="p-0 pr-[5px] text-right">Losses</th>
            <th className="p-0 pr-[5px] text-right">Played</th>
            <th className="overflow-hidden p-0 pl-10 text-left">Win rate</th>
          </tr>
        </thead>
        <tbody>
          {LADDER_ROWS.map(([rank, flag, race, tag, name, ...nums]) => (
            <tr key={rank} className={`h-6 ${rank === 23 ? "bg-[#c6dcc4]" : ""}`}>
              <td className="p-0 pr-[5px] text-right">{rank}</td>
              <td className="p-0">
                <FlagIcon flag={flag} className="mx-auto h-4 w-4" />
              </td>
              <td className="p-0">
                <LeagueIcon league="gm" className="mx-auto size-[15px]" />
              </td>
              <td className="p-0">
                <a href="#team" className="flex items-center">
                  <RaceIcon race={race} className="mr-[3px] size-[15px]" />
                  {tag && <b className="mr-0.5">{tag}</b>}
                  {name}
                </a>
              </td>
              {nums.map((n, i) => (
                <td key={i} className="p-0 pr-[5px] text-right">
                  {n}
                </td>
              ))}
              <td className="p-0" />
            </tr>
          ))}
        </tbody>
      </table>
    </Browser>
  );
}

const DIST: [string, League | null, string[]][] = [
  ["Grandmaster", "gm", ["811", "(0.43%)", "199", "(0.30%)", "199", "(0.35%)", "199", "(0.66%)", "16", "(0.63%)", "198", "(0.61%)"]],
  ["Master", "master", ["9 243", "(4.92%)", "3 912", "(5.89%)", "2 821", "(5.01%)", "1 111", "(3.68%)", "39", "(1.54%)", "1 360", "(4.18%)"]],
  ["Diamond", "diamond", ["25 512", "(13.57%)", "9 208", "(13.87%)", "7 627", "(13.54%)", "4 101", "(13.58%)", "207", "(8.15%)", "4 369", "(13.43%)"]],
  ["Platinum", "platinum", ["29 064", "(15.46%)", "9 667", "(14.56%)", "8 390", "(14.90%)", "5 183", "(17.17%)", "502", "(19.76%)", "5 322", "(16.36%)"]],
  ["Gold", "gold", ["36 847", "(19.60%)", "13 044", "(19.64%)", "11 230", "(19.94%)", "5 956", "(19.73%)", "495", "(19.49%)", "6 122", "(18.81%)"]],
  ["Silver", "silver", ["45 422", "(24.16%)", "16 340", "(24.60%)", "13 879", "(24.65%)", "6 874", "(22.77%)", "635", "(25.00%)", "7 694", "(23.65%)"]],
  ["Bronze", "bronze", ["41 093", "(21.86%)", "14 041", "(21.14%)", "12 167", "(21.61%)", "6 765", "(22.41%)", "646", "(25.43%)", "7 474", "(22.97%)"]],
  ["Population", null, ["187 992", "(100.00%)", "66 411", "(100.00%)", "56 313", "(100.00%)", "30 189", "(100.00%)", "2 540", "(100.00%)", "32 539", "(100.00%)"]],
];

const REGIONS: [Flag, string][] = [["world", "World"], ["eu", "EU"], ["us", "AM"], ["kr", "KR"], ["au", "SEA"], ["cn", "CN"]];

function StatsWindow() {
  return (
    <Browser
      title="Leagues - 1v1 Stats - Ranked FTW"
      path="/stats/leagues/1v1/#v=1&r=4&sx=a"
      frame="mt-[154px] ml-[73px] h-[1070px] w-[838px]"
      vThumb="h-[734px]"
      hThumb="w-[786px]"
    >
      <SiteNav id="stats-search" active="STATS" search="w-[255px]" />
      <FilterRow>
        <FilterLabel spaced="mr-1">Stat:</FilterLabel>
        <FilterItem on>Leagues</FilterItem>
        <FilterItem>Races</FilterItem>
        <FilterItem>Population</FilterItem>
      </FilterRow>
      <ModeRow labelGap="mr-1" />
      <h1 className="mt-[31px] text-2xl leading-7">1v1 League Distribution</h1>
      <p className="mt-5 text-sm leading-[18px]">
        Current and historic sc2 league distribution for teams. The data is calculated by counting all teams ranked in a season. If a player
        plays in multiple regions in identical teams that team will be counted several times for the world total. The region numbers are a
        more accurate way to count players. In 1v1 and random teams each teams only consist of one player.
      </p>
      <h2 className="mt-7 text-base leading-5">Current 1v1 League Distribution</h2>
      <p className="mt-[15px] mb-5 text-sm leading-[18px]">
        The current league distribution for the different regions. Select version to see numbers for WoL or HotS.
      </p>
      <ControlBar gap="gap-4" labelGap="mr-1" groups={[{ label: "Version:", items: [{ text: "HotS", on: true }, { text: "WoL" }] }]} />
      <div className="bg-black pt-2 pb-[5px]">
        <table className="w-full table-fixed border-collapse text-sm leading-[21px] whitespace-nowrap text-white">
          <colgroup>
            <col className="w-[95px]" />
            <col className="w-[21px]" />
            <col className="w-[57px]" />
            <col className="w-[67px]" />
            <col className="w-[49px]" />
            <col className="w-[67px]" />
            <col className="w-[49px]" />
            <col className="w-[67px]" />
            <col className="w-[49px]" />
            <col className="w-[67px]" />
            <col className="w-[42px]" />
            <col className="w-[67px]" />
            <col className="w-[50px]" />
            <col className="w-[68px]" />
          </colgroup>
          <thead>
            <tr className="h-[21px]">
              <th colSpan={2} className="p-0" />
              {REGIONS.map(([flag, name]) => (
                <th key={name} colSpan={2} className="p-0 pl-8">
                  <span className="flex items-center justify-center gap-[5px]">
                    <FlagIcon flag={flag} />
                    {name}
                  </span>
                </th>
              ))}
            </tr>
          </thead>
          <tbody>
            {DIST.map(([name, league, cells]) => (
              <tr key={name} className="h-[21px]">
                <th scope="row" className="p-0 pr-0.5 text-right">
                  {name}
                </th>
                <td className="p-0 pl-[3px]">{league && <LeagueIcon league={league} />}</td>
                {cells.map((c, i) => (
                  <td key={i} className="p-0 pr-0.5 text-right">
                    {c}
                  </td>
                ))}
              </tr>
            ))}
          </tbody>
        </table>
      </div>
      <h2 className="mt-7 text-base leading-5">1v1 League Distribution Over Time</h2>
      <p className="mt-[15px] mb-5 text-sm leading-[18px]">
        League distribution over time. Seasons are marked by the colored sections of the x-axis. Mouse over on points to see date, season
        and league distribution for that point.
      </p>
      <ControlBar
        gap="gap-4"
        labelGap="mr-1"
        groups={[
          { label: "Version:", items: [{ text: "HotS", on: true }, { text: "WoL" }] },
          {
            label: "Region:",
            items: REGIONS.map(([flag, name]) => ({ text: name, icon: <FlagIcon flag={flag} />, on: name === "CN" })),
          },
          { label: "X-Axis:", items: [{ text: "All", on: true }, { text: "Season" }, { text: "Last" }] },
        ]}
      />
      <StackChart spec={STATS_CHART} />
    </Browser>
  );
}

/* ---------- red pen annotations ---------- */

type Stroke = { d: string; w?: number };

function Ink({ at, scale, strokes }: { at: Pt; scale: Pt; strokes: Stroke[] }) {
  return (
    <g transform={`translate(${at[0]} ${at[1]}) scale(${scale[0]} ${scale[1]})`}>
      {strokes.map((s, i) => (
        <polyline key={i} points={s.d} strokeWidth={s.w ?? 3} vectorEffect="non-scaling-stroke" />
      ))}
    </g>
  );
}

const T = 1 / 3;

function PenLayer() {
  return (
    <svg
      width="993"
      height="3493"
      viewBox="0 0 993 3493"
      className="pointer-events-none absolute top-0 left-0"
      fill="none"
      stroke="#ff0000"
      strokeLinecap="round"
      strokeLinejoin="round"
      aria-hidden="true"
    >
      <polyline points="969,43 972,60 973,75" strokeWidth="3" />
      <Ink
        at={[700, 70]}
        scale={[T, T]}
        strokes={[
          { d: "820,-5 823,80 823,160 820,210 805,265 770,345 765,365 730,405 650,450 542,508" },
          { d: "648,482 590,500 542,508 552,468 590,433 593,445 577,473" },
        ]}
      />
      <Ink
        at={[0, 0]}
        scale={[0.6333, T]}
        strokes={[
          { d: "1212,725 1200,708 1175,708 1100,722 1028,742" },
          { d: "1064,682 1070,680 1077,657 1055,670 1035,708 1028,742 1070,762 1102,767" },
        ]}
      />
      <Ink
        at={[0, 180]}
        scale={[0.4209, T]}
        strokes={[
          { d: "80,665 80,695 95,740 140,800 215,865 260,890 297,912" },
          { d: "230,944 265,933 297,912 255,880" },
          { d: "144,635 148,680 165,735 220,768 265,768 300,770" },
          { d: "250,751 285,752 300,770 275,795" },
          { d: "198,582 200,620 196,650 230,692 260,700 293,697" },
          { d: "238,675 270,668 290,678 293,697 288,716 270,721" },
          { d: "890,466 1000,463 1080,462 1140,450 1195,460 1190,455 1255,455 1280,480 1320,492 1333,530 1333,575 1310,587 1230,600 1175,612 1110,615 1080,608 1010,607 960,612 920,600 860,600 835,590 818,550 835,510 890,466" },
          { d: "1140,650 1145,632 1185,628 1250,635 1290,650 1335,643 1368,655 1372,690 1383,740 1383,830 1392,860 1385,900 1387,960 1390,1020 1375,1075 1378,1100 1345,1145 1300,1165 1250,1168 1145,1173 1105,1135 1092,1090 1088,1040 1093,1000 1088,930 1086,810 1065,760 1045,730 1035,705 1050,652 1100,648 1140,650" },
          { d: "530,643 515,675 495,697 462,697" },
          { d: "523,720 490,718 462,697 470,682 478,677" },
          { d: "660,643 650,680 605,745 557,770" },
          { d: "628,780 590,778 557,770 585,727" },
          { d: "395,715 400,760 398,830 402,860 390,920 388,980 380,1030 385,1080 400,1140 408,1190 412,1240 413,1265", w: 5 },
        ]}
      />
      <Ink
        at={[0, 560]}
        scale={[T, 0.4783]}
        strokes={[
          { d: "505,0 518,50 518,95 540,155 565,185 567,220 588,298 640,320 665,370 720,400 770,410", w: 5 },
          { d: "660,418 735,412 770,410 720,363", w: 5 },
          { d: "305,590 310,570 350,538 430,515 540,505 640,507 780,507 900,510 920,515 1050,520 1120,527 1180,550 1197,575 1180,605 1130,635 1070,643 1000,647 860,645 640,640 480,641 400,646 330,642 305,615 305,590" },
          { d: "903,620 830,670 750,725 705,780 702,800 670,845 660,875 635,905 625,955 608,990 610,1025 595,1100 592,1230 587,1280 587,1420 595,1470 605,1500 612,1555", w: 5 },
          { d: "528,1492 565,1520 600,1535 612,1555 625,1520 680,1485", w: 5 },
        ]}
      />
      <Ink
        at={[240, 640]}
        scale={[0.4802, T]}
        strokes={[
          { d: "395,540 395,610 405,660 425,683 460,690 540,690 620,683 660,697 700,703 780,694 860,698 940,698 1020,690 1060,675 1072,640 1080,580 1065,530 1035,492 995,475 930,470 900,464 860,470 820,480 750,476 710,485 685,497 610,498 540,497 470,510 415,522 398,548" },
        ]}
      />
      <Ink
        at={[240, 900]}
        scale={[0.4802, T]}
        strokes={[
          { d: "280,10 330,12 450,13 530,3 600,8 660,13 720,18 780,18 870,10 960,10 1010,15 1170,14 1210,22 1300,27 1340,36 1440,36 1550,33 1562,50 1565,90 1560,170 1550,195 1500,212 1420,220 1350,224 1180,220 1130,222 1080,232 1040,237 980,240 910,244 860,239 810,243 720,235 620,235 540,243 530,230 460,234 420,243 290,244 230,253 180,245 135,235 115,220 98,190 100,130 115,75 160,45 250,27 280,10" },
        ]}
      />
      <Ink
        at={[0, 1290]}
        scale={[0.5038, T]}
        strokes={[
          { d: "1560,632 1545,640 1500,645 1340,645 1250,638 1160,645 1110,660 1060,660 1000,640 900,645 800,650 740,640 695,636 693,680 685,688 640,652 600,648 580,636 540,633 480,640 450,640 440,625 330,638 240,642 190,645 150,622 35,620 30,590 28,500 35,450 50,430 90,420 110,410 170,412 190,407 320,402 370,407 510,410 530,402 590,402 660,395 700,397 720,403 840,400 900,402 970,414 1060,418 1120,415 1200,403 1240,382 1380,383 1400,390 1530,387 1568,392 1640,377 1730,380 1780,398 1800,440 1804,510 1790,580 1700,608 1560,632" },
          { d: "0,662 40,656 80,647 120,650 150,665 210,675 300,668 400,660 440,650 460,645 490,655 495,685 485,720 450,740 400,765 320,790 290,785 258,775 265,785 200,787 130,768 90,752 0,740" },
          { d: "1435,1050 1432,980 1425,900 1400,845 1370,820 1290,807 1200,806 1080,800 960,805 850,803 730,805 680,817 600,823 530,828 460,843 370,845 290,838 195,827 140,832 90,855 60,890 45,950 38,1000 36,1050" },
        ]}
      />
      <Ink
        at={[0, 1600]}
        scale={[0.5804, T]}
        strokes={[
          { d: "1245,120 1238,180 1245,230 1225,330 1200,400 1180,455 1130,495 1050,505 1000,497 880,497 800,507 720,514 690,503 600,503 520,507 440,508 370,508 310,500 265,475 215,465 160,450 110,435 65,405 45,345 32,290 30,215 25,208 31,120" },
          { d: "0,640 40,630 70,612 200,608 330,608 390,612 500,606 570,603 660,588 760,588 790,595 840,582 940,583 1000,588 1120,583 1170,572 1210,556 1270,556 1305,580 1315,620 1318,725 1305,736 1240,740 1110,742 1080,740 1050,728 1000,732 850,735 780,738 650,744 560,740 400,730 320,725 200,720 150,715 80,715 60,698 0,695" },
        ]}
      />
      <Ink
        at={[60, 2000]}
        scale={[0.595, T]}
        strokes={[
          { d: "238,722 225,700 200,670 180,655 165,610 163,570 145,520 140,480 115,400 102,370 98,300 97,250 103,205 130,170 180,110 220,85 270,40 325,35 350,65 383,100 405,170 415,240 425,290 435,373", w: 5 },
          { d: "397,253 405,320 435,373 440,310 460,240", w: 5 },
          { d: "360,825 375,835 410,845 450,843 480,830 510,805 550,797 600,797 660,808 720,820 790,822 860,810 980,800 1065,800 1100,830 1120,855 1160,855 1220,865 1235,880 1243,930 1238,980 1220,995 1150,997 1120,1002 1050,1002 980,995 920,987 900,970 840,965 780,970 720,963 690,952 670,960 600,968 560,975 500,978 460,967 380,965 200,952 130,945 117,900 118,870 130,830 190,825 210,833 260,830 340,820 410,830 440,825 462,800 462,765 450,738 370,745 300,757 150,763 100,760 80,745 45,750 30,790 18,850 20,950 28,1040 35,1100 50,1150 100,1172 200,1185 260,1190 320,1180 400,1172 500,1168 560,1172 640,1174 665,1150 672,1090 670,1030 655,987 610,990 560,1000 530,1008 420,1008 370,1015 320,1030 200,1030 160,1020 125,1000 115,940 118,890" },
        ]}
      />
      <path d="M345.5 2210 V2233 L347 2242" stroke="#000" strokeWidth="1" />
      <Ink
        at={[60, 2380]}
        scale={[0.5485, T]}
        strokes={[
          { d: "550,1305 530,1260 515,1217 497,1217 470,1160 462,1100 460,1020 465,900 470,780 478,640 480,520 470,485 450,458 400,435 330,435 290,422 240,423 190,436 160,433 140,422 120,420 105,440 100,465 105,495 125,515 135,540 170,562 210,565 240,550 300,548 350,555 400,558 445,560 465,600 465,780 460,900 450,1020 448,1110 440,1180 445,1230 465,1270 480,1330 510,1350" },
          { d: "550,1305 600,1328 650,1340 685,1370 720,1375 810,1388 1000,1387 1070,1385 1140,1377 1220,1385 1230,1375 1250,1390 1290,1403 1310,1420 1338,1415 1342,1440 1340,1475 1310,1482 1275,1485 1275,1550 1260,1580 1235,1593 1215,1598 1190,1587 1130,1587 1100,1592 950,1600 800,1607 730,1620 700,1625 660,1615 640,1600 600,1598 540,1602 420,1598 380,1600 350,1610 150,1610 120,1618 105,1610 90,1575 92,1510 105,1488 125,1483 210,1483 245,1492 310,1480 430,1482 465,1472 535,1475 535,1440 520,1380 510,1350" },
        ]}
      />
    </svg>
  );
}

function Note({ place, lines }: { place: string; lines: string[] }) {
  return (
    <p className={`absolute font-[DejaVu_Sans,sans-serif] font-bold whitespace-nowrap text-[#ff0000] ${place}`}>
      {lines.map((l) => (
        <span key={l} className="block">
          {l}
        </span>
      ))}
    </p>
  );
}

const SMALL = "text-[13px] leading-[17px]";

function Notes() {
  return (
    <>
      <Note place="top-[34px] left-[752px] text-[17px] leading-5" lines={["SEARCH FOR PLAYER"]} />
      <Note place={`top-[338px] left-[14px] ${SMALL}`} lines={["GO TO", "POSITION IN", "LADDER"]} />
      <Note place={`top-[334px] left-[396px] ${SMALL}`} lines={["BATTLE NET PAGE"]} />
      <Note place={`top-[377px] left-[196px] ${SMALL}`} lines={["TEAM RANK OVER TIME"]} />
      <Note place={`top-[396px] left-[456px] ${SMALL}`} lines={["TEAM MATE", "PLAYER PAGES"]} />
      <Note place={`top-[816px] left-[120px] ${SMALL}`} lines={["GO TO", "POSITION IN", "LADDER"]} />
      <Note place={`top-[816px] left-[642px] ${SMALL}`} lines={["BACK TO", "PLAYER PAGE"]} />
      <Note place={`top-[910px] left-[436px] ${SMALL}`} lines={["CONTROLS FOR THE GRAPH , CLICK THEM"]} />
      <Note place="top-[1012px] left-[590px] text-base leading-5" lines={["UPDATED ONCE A DAY"]} />
      <Note place={`top-[1059px] left-[586px] ${SMALL}`} lines={["LADDER POSITION OVER TIME", "NOT MMR"]} />
      <Note place={`top-[1443px] left-[786px] ${SMALL}`} lines={["SORTING AND", "FILTERING", "DO IT"]} />
      <Note place={`top-[1529px] left-[61px] ${SMALL}`} lines={["MORE LADDER"]} />
      <Note place={`top-[1566px] left-[339px] ${SMALL}`} lines={["CLICK TO", "GO TO TEAM"]} />
      <Note place={`top-[1800px] left-[341px] ${SMALL}`} lines={["HITMAN", "RANK"]} />
      <Note place="top-[2071px] left-[368px] text-[21px] leading-6" lines={["THERE IS ALSO STATISTICS"]} />
      <Note place="top-[2352px] left-[110px] text-base leading-5" lines={["VARIOUS MORE OR LESS INTERESTING", "STATISTICS"]} />
      <Note place="top-[2854px] left-[360px] text-base leading-5" lines={["CONTROLS FOR GRAPH AND TABLE, CLICK THEM"]} />
    </>
  );
}

export default function App() {
  return (
    <div className="relative overflow-hidden bg-white pt-6 pb-[298px] font-[Liberation_Sans,Arial,sans-serif] text-black">
      <header className="flex h-[39px] items-center border-y-2 border-black bg-[#84b484] pl-[70px] font-[DejaVu_Sans,sans-serif] text-[21px]">
        <a href="#home" className="font-bold whitespace-nowrap">
          RANKED FOR THE WIN
        </a>
        <a href="#features" className="ml-[19px]">
          FEATURES
        </a>
        <input
          aria-label="Search"
          placeholder="Search by Player Name or battle.net URL"
          className="ml-auto h-5 w-[247px] border border-r-0 border-black bg-[#eee] pl-1 font-[Liberation_Sans,Arial,sans-serif] text-sm placeholder:text-[#aaa]"
        />
      </header>
      <main>
        <div className="flex items-start gap-[76px] pl-[116px]">
          <PlayerWindow />
          <SearchWindow />
        </div>
        <TeamWindow />
        <LadderWindow />
        <StatsWindow />
      </main>
      <PenLayer />
      <Notes />
    </div>
  );
}
